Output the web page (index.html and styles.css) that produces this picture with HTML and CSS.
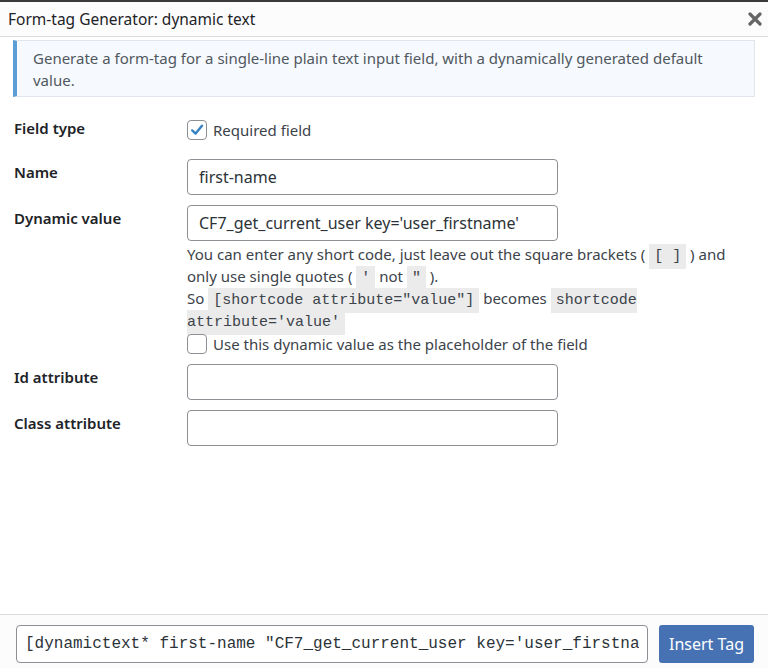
FILE: index.html
```html
<!DOCTYPE html>
<html lang="en">

<head>
    <meta charset="utf-8" />
    <title>Form-tag Generator: dynamic text</title>
    <link rel="stylesheet" href="styles.css">
</head>

<body>
    <div class="modal">
        <header class="modal-header">
            <h1 class="modal-title">Form-tag Generator: dynamic text</h1>
            <button class="modal-close" type="button" aria-label="Close">
                <svg width="14" height="14" viewBox="0 0 14 14">
                    <path d="M2 2 L12 12 M12 2 L2 12" stroke="#666" stroke-width="3.2" stroke-linecap="round" />
                </svg>
            </button>
        </header>

        <main class="modal-body">
            <div class="notice">Generate a form-tag for a single-line plain text input field, with a dynamically generated default value.</div>

            <div class="form-table">
                <div class="form-row form-row-first">
                    <div class="form-label">Field type</div>
                    <div class="form-field">
                        <label class="check">
                            <span class="checkbox is-checked">
                                <svg width="16" height="16" viewBox="0 0 16 16">
                                    <path d="M3.2 8.4 L6.6 11.6 L13 3.8" fill="none" stroke="#3582c4" stroke-width="2.4" stroke-linecap="round" stroke-linejoin="round" />
                                </svg>
                            </span>
                            Required field
                        </label>
                    </div>
                </div>

                <div class="form-row">
                    <div class="form-label">Name</div>
                    <div class="form-field">
                        <input class="text-input" type="text" value="first-name">
                    </div>
                </div>

                <div class="form-row">
                    <div class="form-label">Dynamic value</div>
                    <div class="form-field">
                        <input class="text-input" type="text" value="CF7_get_current_user key='user_firstname'">
                        <div class="field-help">
                            You can enter any short code, just leave out the square brackets ( <code>[ ]</code> ) and only use single quotes ( <code>'</code> not <code>"</code> ).<br>
                            So <code>[shortcode attribute="value"]</code> becomes <code>shortcode attribute='value'</code>
                        </div>
                        <label class="check check-help">
                            <span class="checkbox"></span>
                            Use this dynamic value as the placeholder of the field
                        </label>
                    </div>
                </div>

                <div class="form-row">
                    <div class="form-label">Id attribute</div>
                    <div class="form-field">
                        <input class="text-input" type="text" value="">
                    </div>
                </div>

                <div class="form-row form-row-last">
                    <div class="form-label">Class attribute</div>
                    <div class="form-field">
                        <input class="text-input" type="text" value="">
                    </div>
                </div>
            </div>
        </main>

        <footer class="modal-footer">
            <input class="tag-output" type="text" readonly value="[dynamictext* first-name &quot;CF7_get_current_user key='user_firstname'&quot;]">
            <button class="insert-tag" type="button">Insert Tag</button>
        </footer>
    </div>
</body>

</html>
```

FILE: styles.css
```css
body {
    margin: 0;
    font-family: "Noto Sans", "Open Sans", sans-serif;
    font-size: 15px;
    color: #3c434a;
    background: #fff;
}

.modal {
    width: 768px;
    height: 668px;
    display: flex;
    flex-direction: column;
    border-top: 2px solid #3a3a3a;
    box-sizing: border-box;
}

.modal-header {
    display: flex;
    align-items: center;
    justify-content: space-between;
    height: 35px;
    padding: 0 4px 0 8px;
    background: #fcfcfc;
    border-bottom: 1px solid #dcdcde;
    box-sizing: border-box;
}

.modal-title {
    margin: 0;
    font-size: 15.5px;
    font-weight: normal;
    color: #1d2327;
}

.modal-close {
    border: 0;
    background: none;
    padding: 0;
    width: 18px;
    height: 18px;
    display: flex;
    align-items: center;
    justify-content: center;
}

.modal-body {
    flex: 1;
    padding: 3px 13px 0 13px;
}

.notice {
    background: #f6fafe;
    border: 1px solid #e0e6ec;
    border-left: 4px solid #5b9dd5;
    padding: 6px 16px 5px 16px;
    line-height: 22px;
    color: #50575e;
}

.form-table {
    margin-top: 20px;
    padding-left: 1px;
}

.form-row {
    display: flex;
    margin-bottom: 10px;
}

.form-row-first {
    margin-bottom: 18px;
}

.form-row-last {
    margin-top: 1px;
}

.form-label {
    width: 173px;
    flex: none;
    padding-top: 2px;
    line-height: 22px;
    font-weight: 600;
    color: #1d2327;
}

.form-row-first .form-label {
    padding-top: 0;
}

.form-field {
    width: 555px;
}

.check {
    display: flex;
    align-items: center;
    gap: 6px;
    line-height: 22px;
    color: #3c434a;
}

.checkbox {
    width: 18px;
    height: 18px;
    border: 1px solid #8c8f94;
    border-radius: 4px;
    background: #fff;
    display: flex;
    align-items: center;
    justify-content: center;
    flex: none;
}

.form-row-first .check {
    padding-top: 2px;
}

.check-help {
    margin-top: 2px;
    margin-bottom: -1px;
}

.text-input {
    display: block;
    width: 371px;
    height: 36px;
    box-sizing: border-box;
    border: 1px solid #8c8f94;
    border-radius: 4px;
    padding: 0 11px;
    font-family: "Noto Sans", "Open Sans", sans-serif;
    font-size: 16px;
    color: #2c3338;
    background: #fff;
}

.field-help {
    margin-top: 2px;
    line-height: 22px;
}

code {
    font-family: "Liberation Mono", "DejaVu Sans Mono", monospace;
    font-size: 15px;
    line-height: 1;
    background: #ebebeb;
    padding: 4px 5px;
}

.modal-footer {
    display: flex;
    gap: 11px;
    padding: 10px 14px 5px 16px;
    background: #fcfcfc;
    border-top: 1px solid #dcdcde;
}

.tag-output {
    width: 632px;
    height: 38px;
    box-sizing: border-box;
    border: 1px solid #8c8f94;
    border-radius: 4px;
    padding: 0 8px;
    font-family: "Liberation Mono", "DejaVu Sans Mono", monospace;
    font-size: 16px;
    color: #2c3338;
    background: #fff;
}

.insert-tag {
    width: 95px;
    height: 38px;
    border: 0;
    border-radius: 3px;
    background: #4672b3;
    color: #fff;
    font-family: "Noto Sans", "Open Sans", sans-serif;
    font-size: 16px;
}
```
